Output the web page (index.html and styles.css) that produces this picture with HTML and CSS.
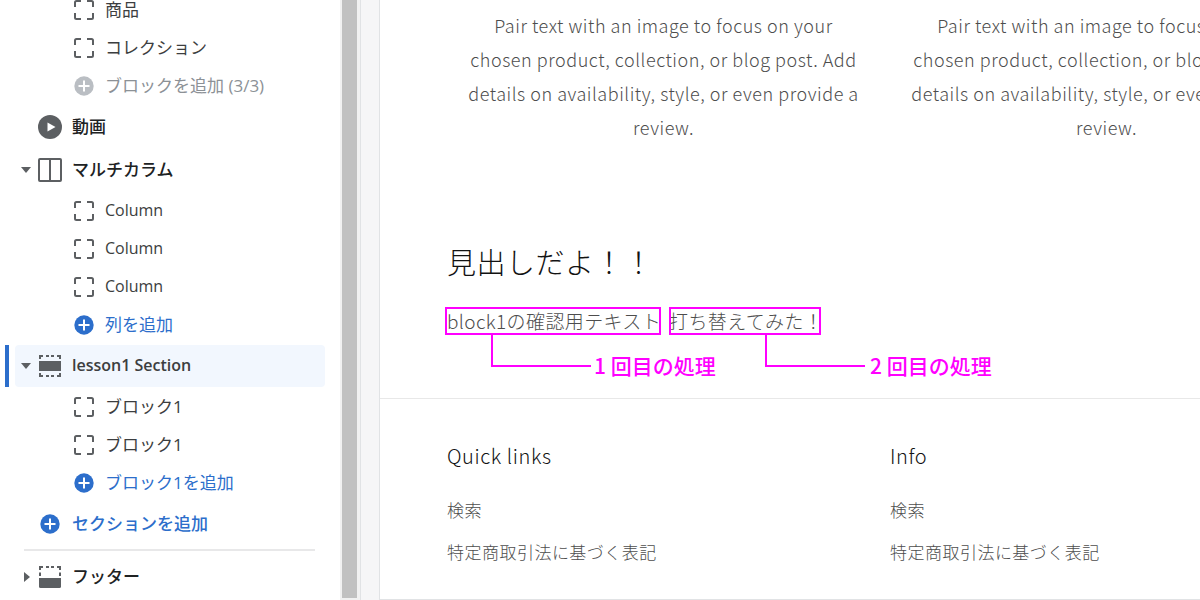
FILE: index.html
```html
<!DOCTYPE html>
<html lang="ja">
<head>
    <meta charset="UTF-8">
    <meta name="viewport" content="width=device-width, initial-scale=1.0">
    <title>テーマエディタ</title>
    <link rel="stylesheet" href="styles.css">
</head>
<body>

    <svg class="sprite" aria-hidden="true">
        <symbol id="icon-block" viewBox="0 0 20 20">
            <path d="M1 7V2.500Q1 1 2.500 1H7M13 1H17.500Q19 1 19 2.500V7M19 13V17.500Q19 19 17.500 19H13M7 19H2.500Q1 19 1 17.500V13" fill="none" stroke="currentColor" stroke-width="2"/>
        </symbol>
        <symbol id="icon-plus" viewBox="0 0 20 20">
            <circle cx="10" cy="10" r="9.700" fill="currentColor"/>
            <path d="M10 4.500V15.500M4.500 10H15.500" stroke="#fff" stroke-width="2"/>
        </symbol>
        <symbol id="icon-play" viewBox="0 0 24 24">
            <circle cx="12" cy="12" r="12" fill="currentColor"/>
            <path d="M9.500 7.500L17.500 12L9.500 16.500Z" fill="#fff"/>
        </symbol>
        <symbol id="icon-columns" viewBox="0 0 24 24">
            <rect x="1" y="1" width="22" height="22" rx="1" fill="none" stroke="currentColor" stroke-width="2"/>
            <path d="M12 1V23" stroke="currentColor" stroke-width="2"/>
        </symbol>
        <symbol id="icon-section" viewBox="0 0 24 24">
            <rect x="1" y="7" width="22" height="10" fill="currentColor"/>
            <path d="M2 5V2H5M8 2H11M13 2H16M19 2H22V5M2 19V22H5M8 22H11M13 22H16M19 22H22V19" fill="none" stroke="currentColor" stroke-width="2"/>
        </symbol>
        <symbol id="icon-footer" viewBox="0 0 24 24">
            <path d="M1 13H23V21.500Q23 23 21.500 23H2.500Q1 23 1 21.500Z" fill="currentColor"/>
            <path d="M2 5V2H5M8 2H11M13 2H16M19 2H22V5M2 7.500V11M22 7.500V11" fill="none" stroke="currentColor" stroke-width="2"/>
        </symbol>
        <symbol id="icon-down" viewBox="0 0 10 10">
            <path d="M0 2H10L5 8Z" fill="currentColor"/>
        </symbol>
        <symbol id="icon-right" viewBox="0 0 10 10">
            <path d="M3 0L9 5L3 10Z" fill="currentColor"/>
        </symbol>
    </svg>

    <div class="editor">
        <nav class="sidebar">
            <div class="tree">
                <button class="block"><svg class="icon"><use href="#icon-block"/></svg>商品</button>
                <button class="block"><svg class="icon"><use href="#icon-block"/></svg>コレクション</button>
                <button class="block add" disabled><svg class="icon"><use href="#icon-plus"/></svg>ブロックを追加 (3/3)</button>

                <button class="section"><span class="arrow"></span><svg class="icon-lg"><use href="#icon-play"/></svg>動画</button>

                <button class="section"><svg class="arrow"><use href="#icon-down"/></svg><svg class="icon-lg"><use href="#icon-columns"/></svg>マルチカラム</button>
                <button class="block latin"><svg class="icon"><use href="#icon-block"/></svg>Column</button>
                <button class="block latin"><svg class="icon"><use href="#icon-block"/></svg>Column</button>
                <button class="block latin"><svg class="icon"><use href="#icon-block"/></svg>Column</button>
                <button class="block add"><svg class="icon"><use href="#icon-plus"/></svg>列を追加</button>

                <div class="selected">
                    <button class="section latin"><svg class="arrow"><use href="#icon-down"/></svg><svg class="icon-lg"><use href="#icon-section"/></svg>lesson1 Section</button>
                </div>
                <button class="block"><svg class="icon"><use href="#icon-block"/></svg>ブロック1</button>
                <button class="block"><svg class="icon"><use href="#icon-block"/></svg>ブロック1</button>
                <button class="block add"><svg class="icon"><use href="#icon-plus"/></svg>ブロック1を追加</button>

                <button class="section add"><span class="arrow"></span><svg class="icon"><use href="#icon-plus"/></svg>セクションを追加</button>
                <hr class="divider">
                <button class="section"><svg class="arrow"><use href="#icon-right"/></svg><svg class="icon-lg"><use href="#icon-footer"/></svg>フッター</button>
            </div>
        </nav>

        <div class="scrollbar"><div class="thumb"></div></div>

        <div class="gutter"></div>

        <main class="preview">
            <section class="columns multicolumn">
                <p>Pair text with an image to focus on your chosen product, collection, or blog post. Add details on availability, style, or even provide a review.</p>
                <p>Pair text with an image to focus on your chosen product, collection, or blog post. Add details on availability, style, or even provide a review.</p>
            </section>

            <section class="lesson">
                <h2>見出しだよ！！</h2>
                <div class="texts">
                    <div class="marked first">block1の確認用テキスト
                        <div class="callout"><span class="line"></span><span class="label">1 回目の処理</span></div>
                    </div>
                    <div class="marked second">打ち替えてみた！
                        <div class="callout"><span class="line"></span><span class="label">2 回目の処理</span></div>
                    </div>
                </div>
            </section>

            <footer class="columns footer">
                <div>
                    <h3>Quick links</h3>
                    <ul>
                        <li><a href="#">検索</a></li>
                        <li><a href="#">特定商取引法に基づく表記</a></li>
                    </ul>
                </div>
                <div>
                    <h3>Info</h3>
                    <ul>
                        <li><a href="#">検索</a></li>
                        <li><a href="#">特定商取引法に基づく表記</a></li>
                    </ul>
                </div>
            </footer>
        </main>
    </div>

</body>
</html>
```
FILE: styles.css
```css
* {
    box-sizing: border-box;
}

body {
    margin: 0;
    background: #fff;
    font-family: "Noto Sans CJK JP", sans-serif;
}

.sprite {
    display: none;
}

.editor {
    display: flex;
    height: 100vh;
    overflow: hidden;
}

/* sidebar */
.sidebar {
    flex: 0 0 340px;
    overflow: hidden;
    font-family: "Open Sans", "Noto Sans CJK JP", sans-serif;
}

/* the list is scrolled a little */
.tree {
    margin-top: -9px;
}

button {
    display: flex;
    align-items: center;
    width: 100%;
    padding: 0 0 4px;
    border: 0;
    background: none;
    color: #202223;
    font-family: inherit;
    font-size: 17px;
    text-align: left;
    white-space: nowrap;
    cursor: pointer;
}

button svg {
    margin-top: 4px;
}

.block {
    height: 38px;
    padding-left: 74px;
    gap: 11px;
    color: #3c3e40;
}

.section {
    height: 42px;
    margin: 1px 0;
    padding-left: 21px;
    font-weight: 500;
}

.latin {
    padding-bottom: 2px;
    font-size: 16px;
}

.latin svg {
    margin-top: 2px;
}

.icon {
    width: 20px;
    height: 20px;
    color: #5c5f62;
}

.icon-lg {
    width: 24px;
    height: 24px;
    margin-right: 10px;
    margin-left: 7px;
    color: #5c5f62;
}

.section .icon {
    margin-right: 12px;
    margin-left: 9px;
}

.arrow {
    width: 10px;
    height: 10px;
    color: #5c5f62;
}

.add,
.add .icon {
    color: #2c6ecb;
}

.add:disabled {
    color: #8c9196;
}

.add:disabled .icon {
    color: #babec3;
}

.selected {
    margin: 1px 15px 1px 5px;
    padding-left: 6px;
    border-left: 4px solid #2c6ecb;
}

.selected .section {
    margin: 0;
    padding-left: 6px;
    border-radius: 4px;
    background: #f2f7fe;
    color: #3c3e40;
    font-weight: 600;
}

.divider {
    height: 2px;
    margin: 4px 25px 5px 24px;
    border: 0;
    background: #e8e8e9;
}

.scrollbar {
    flex: 0 0 21px;
    padding: 0 3px 2px 2px;
    border-right: 1px solid #e1e3e5;
    background: #f1f1f1;
}

.thumb {
    height: 100%;
    background: #c1c1c1;
}

.gutter {
    flex: 0 0 19px;
    border-right: 1px solid #e1e3e5;
    background: #f6f6f7;
}

/* preview */
.preview {
    flex: 1;
    overflow: hidden;
    border-bottom: 1px solid #e1e3e5;
    color: #4d4d4d;
    font-weight: 300;
    letter-spacing: 0.03em;
}

.columns {
    display: grid;
    grid-template-columns: repeat(2, 433px);
    gap: 10px;
    padding-left: 67px;
}

.multicolumn {
    padding-top: 8px;
}

.multicolumn p {
    margin: 0;
    padding: 0 18px;
    font-size: 18px;
    letter-spacing: 0.03em;
    line-height: 34px;
    text-align: center;
}

.lesson {
    padding: 96px 67px 65px;
}

.lesson h2 {
    margin: 0;
    color: #121212;
    font-size: 29px;
    font-weight: 300;
    line-height: 42px;
}

.texts {
    display: flex;
    gap: 8px;
    margin-top: 27px;
}

.marked {
    position: relative;
    font-size: 19px;
    letter-spacing: 0.02em;
    line-height: 24px;
    white-space: nowrap;
}

.marked::before {
    content: "";
    position: absolute;
    inset: -2px 0 -2px -2px;
    border: 2px solid #f0f;
}

.second::before {
    right: 2px;
    left: 0;
}

.callout {
    position: absolute;
    top: 26px;
    left: 44px;
    display: flex;
    gap: 3px;
}

.second .callout {
    left: 96px;
    gap: 5px;
}

.line {
    width: 100px;
    height: 32px;
    border-bottom: 2px solid #f0f;
    border-left: 2px solid #f0f;
}

.label {
    padding-top: 15px;
    color: #f0f;
    font-size: 21px;
    font-weight: 500;
    letter-spacing: 0;
    line-height: 30px;
}

.footer {
    padding-top: 42px;
    border-top: 1px solid #e8e8e8;
}

.footer h3 {
    margin: 0 0 18px;
    color: #121212;
    font-size: 20px;
    font-weight: 300;
    letter-spacing: 0.03em;
    line-height: 30px;
}

.footer ul {
    margin: 0;
    padding: 0;
    list-style: none;
}

.footer li {
    font-size: 17px;
    line-height: 42px;
}

.footer a {
    color: inherit;
    text-decoration: none;
}
```
